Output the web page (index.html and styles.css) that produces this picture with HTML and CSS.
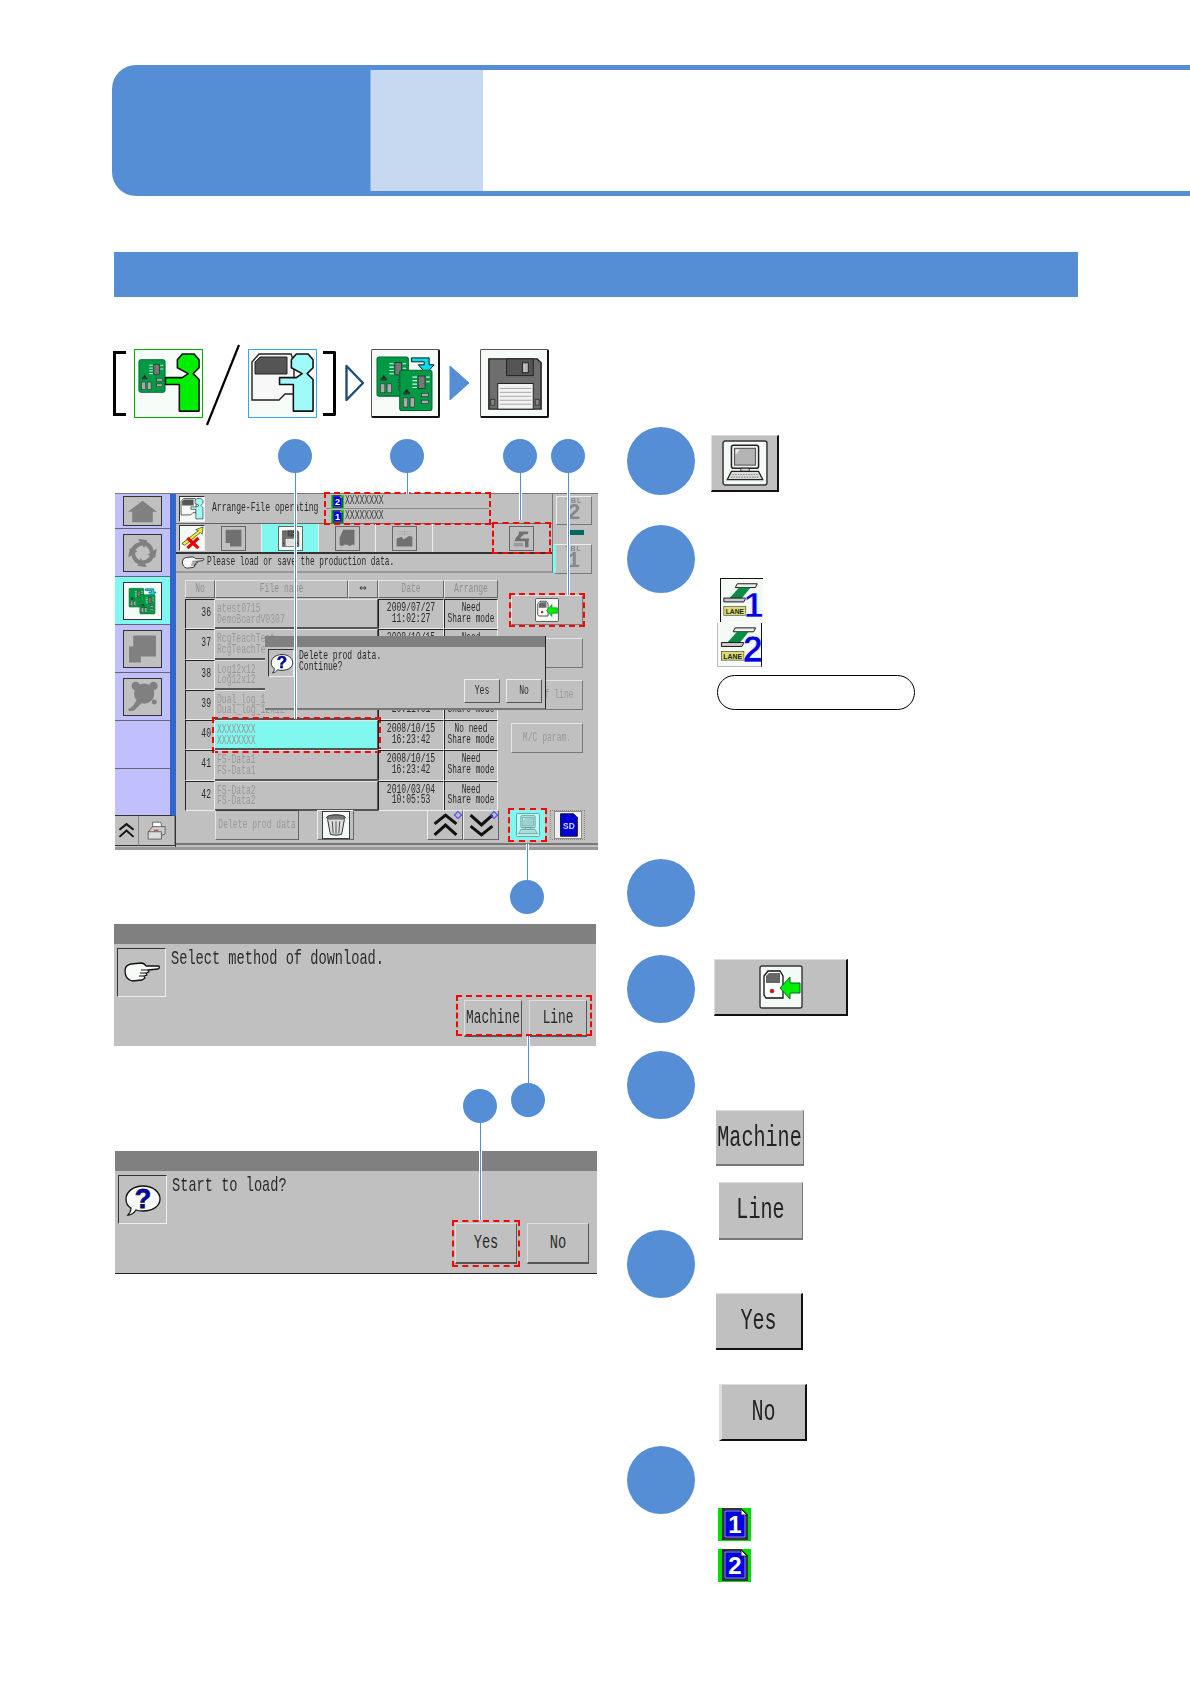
FILE: index.html
```html
<!DOCTYPE html>
<html lang="en">
<head>
  <meta charset="UTF-8">
  <title>Production data</title>
  <link rel="stylesheet" href="styles.css">
</head>
<body>
<svg class="defs" width="0" height="0">
  <symbol id="i-board" viewBox="0 0 30 37">
    <rect x="1" y="1" width="28" height="35" rx="2" fill="#009a44" stroke="#063" stroke-width="1"/>
    <rect x="17" y="6" width="6" height="11" fill="#777" stroke="#222" stroke-width=".6"/>
    <path d="M12 7h4M12 10h4M12 13h4M12 16h4M24 7h3M24 11h3" stroke="#cfe" stroke-width="1"/>
    <path d="M5 20l2-3 2 3z" fill="#222"/>
    <rect x="4" y="20" width="6" height="2" fill="#333"/>
    <rect x="4" y="25" width="4" height="8" fill="#aaa" stroke="#222" stroke-width=".5"/>
    <rect x="10" y="25" width="4" height="8" fill="#aaa" stroke="#222" stroke-width=".5"/>
    <rect x="20" y="21" width="6" height="3" fill="#aaa" stroke="#222" stroke-width=".5"/>
    <rect x="20" y="27" width="6" height="3" fill="#aaa" stroke="#222" stroke-width=".5"/>
  </symbol>
  <symbol id="i-person" viewBox="0 0 68 68">
    <path d="M48 4L60 4 65 10 65 18 59 24 65 30 65 62 45 62 45 35 31 35 31 28 48 28 54 24 43 18 43 10Z" stroke="#111" stroke-width="1.600" stroke-linejoin="round"/>
  </symbol>
  <symbol id="i-boards" viewBox="0 0 68 68">
    <use href="#i-board" x="4" y="4" width="34" height="46"/>
    <path d="M40 8H58V15H63L55 24 47 15H53V12H40Z" fill="#0de" stroke="#111" stroke-width="1"/>
    <use href="#i-board" x="27" y="18" width="35" height="46"/>
  </symbol>
  <symbol id="i-floppy" viewBox="0 0 68 68">
    <path d="M8 9H57L61 13V60H8Z" fill="#6e6e6e" stroke="#222" stroke-width="1.500"/>
    <rect x="26" y="9" width="27" height="17" fill="#555" stroke="#222"/>
    <rect x="42" y="13" width="6" height="10" fill="#bbb" stroke="#222"/>
    <rect x="17" y="34" width="36" height="26" fill="#f2f2f2" stroke="#222"/>
    <path d="M19 39H51M19 43H51M19 47H51M19 51H51M19 55H51" stroke="#aaa"/>
    <rect x="10" y="50" width="4" height="6" fill="#888" stroke="#222" stroke-width=".7"/>
    <rect x="55" y="50" width="4" height="6" fill="#888" stroke="#222" stroke-width=".7"/>
  </symbol>
  <symbol id="i-pc" viewBox="0 0 44 44">
    <rect x="1" y="1" width="42" height="42" rx="2" fill="#f4faf6" stroke="#333" stroke-width="1.400"/>
    <rect x="9" y="5" width="26" height="22" rx="2" fill="#eee" stroke="#222" stroke-width="1.400"/>
    <rect x="12" y="8" width="20" height="16" fill="#b4b4b4" stroke="#555"/>
    <path d="M13 9H17L13 14Z" fill="#eee"/>
    <rect x="18" y="27" width="8" height="3" fill="#ddd" stroke="#222" stroke-width=".8"/>
    <path d="M9 30H35L39 38H5Z" fill="#ddd" stroke="#222" stroke-width="1.200"/>
    <path d="M10 33H34M8.500 35.500H35.500" stroke="#888" stroke-dasharray="1.500 1"/>
  </symbol>
  <symbol id="i-door" viewBox="0 0 44 44">
    <rect x="1" y="1" width="42" height="42" rx="2" fill="#f4faf6" stroke="#333" stroke-width="1.400"/>
    <path d="M5 30V11L9 6H21L24 11V33H7Z" fill="#fff" stroke="#111" stroke-width="1.300"/>
    <path d="M7 18V11L10 8H21V18Z" fill="#666"/>
    <circle cx="13" cy="26" r="2" fill="#e00" stroke="#555" stroke-width=".6"/>
    <path d="M21 23L31 12V18H41V28H31V34Z" fill="#00ee00" stroke="#062" stroke-width="1"/>
  </symbol>
  <symbol id="i-lane1" viewBox="0 0 44 44">
    <path d="M17 5H38L36 9H15Z" fill="#eee" stroke="#111"/>
    <path d="M19 9H31L22 20H9Z" fill="#0a8c46"/>
    <path d="M3 20H26L24 24H3Z" fill="#ccc" stroke="#111"/>
    <rect x="3" y="29" width="23" height="9" fill="#dcdc70" stroke="#333" stroke-width=".6"/>
    <text x="14.500" y="36.500" text-anchor="middle" class="lane-tag">LANE</text>
    <text x="34" y="40" text-anchor="middle" class="lane-num">1</text>
  </symbol>
  <symbol id="i-lane2" viewBox="0 0 44 44">
    <path d="M17 5H38L36 9H15Z" fill="#eee" stroke="#111"/>
    <path d="M19 9H31L22 20H9Z" fill="#0a8c46"/>
    <path d="M3 20H26L24 24H3Z" fill="#ccc" stroke="#111"/>
    <rect x="3" y="29" width="23" height="9" fill="#dcdc70" stroke="#333" stroke-width=".6"/>
    <text x="14.500" y="36.500" text-anchor="middle" class="lane-tag">LANE</text>
    <text x="35" y="40" text-anchor="middle" class="lane-num">2</text>
  </symbol>
  <symbol id="i-hand" viewBox="0 0 38 24">
    <path d="M2 11Q2 5 8 4L18 3Q21 3 23 6L36 6Q37 8 35 9L25 10 26 12 23 13 24 15 21 16 22 18 19 20 9 21Q2 19 2 11Z" fill="#f8fcf8" stroke="#111" stroke-width="1.300" stroke-linejoin="round"/>
    <path d="M18 10H25M17 13H23M16 16H21" stroke="#111" stroke-width="1"/>
  </symbol>
  <symbol id="i-ask" viewBox="0 0 38 34">
    <path d="M19 2C29 2 36 8 36 15 36 22 29 27 19 27 17 27 14 27 12 26 10 29 7 31 4 31 6 29 7 27 7 24 3 22 2 18 2 15 2 8 9 2 19 2Z" fill="#f8fcf8" stroke="#111" stroke-width="1.300"/>
    <text x="19" y="24" text-anchor="middle" class="ask-mark">?</text>
  </symbol>
  <symbol id="i-trash" viewBox="0 0 30 30">
    <rect x=".5" y=".5" width="29" height="29" fill="#f4faf6" stroke="#333"/>
    <ellipse cx="15" cy="7" rx="10" ry="3" fill="#777" stroke="#222"/>
    <path d="M6 9L9 25Q15 27 21 25L24 9" fill="#ddd" stroke="#222"/>
    <path d="M11 11L12 24M15 11V25M19 11L18 24" stroke="#444"/>
  </symbol>
  <symbol id="i-printer" viewBox="0 0 30 26">
    <path d="M9 1H20L22 9H9Z" fill="#fff" stroke="#222" stroke-width=".8"/>
    <path d="M4 13L9 7H26V17L21 19H4Z" fill="#ccc" stroke="#222" stroke-width=".8"/>
    <path d="M3 14H21V24H3Z" fill="#ddd" stroke="#222" stroke-width=".8"/>
    <path d="M11 12H17" stroke="#c33" stroke-width="1.500"/>
  </symbol>
  <symbol id="i-chev" viewBox="0 0 24 22">
    <path d="M2 10L12 2 22 10M2 20L12 11 22 20" fill="none" stroke="#111" stroke-width="2.800"/>
  </symbol>
  <symbol id="i-sd" viewBox="0 0 30 30">
    <rect x=".5" y=".5" width="29" height="29" fill="#eee" stroke="#888"/>
    <path d="M7 3H21L25 7V27H7Z" fill="#0000d8" stroke="#111"/>
    <text x="16" y="19" text-anchor="middle" class="sd-tag">SD</text>
  </symbol>
  <symbol id="i-doc1" viewBox="0 0 33 33">
    <rect width="33" height="33" fill="#00e000"/>
    <path d="M5 1H23L29 7V31H5Z" fill="#0000e0" stroke="#333" stroke-width="2"/>
    <path d="M7 3H22L27 8V29H7Z" fill="none" stroke="#99a" stroke-width="1"/>
    <path d="M23 1V7H29Z" fill="#fff" stroke="#222"/>
    <text x="17" y="25" text-anchor="middle" class="doc-num">1</text>
  </symbol>
  <symbol id="i-doc2" viewBox="0 0 33 33">
    <rect width="33" height="33" fill="#00e000"/>
    <path d="M5 1H23L29 7V31H5Z" fill="#0000e0" stroke="#333" stroke-width="2"/>
    <path d="M7 3H22L27 8V29H7Z" fill="none" stroke="#99a" stroke-width="1"/>
    <path d="M23 1V7H29Z" fill="#fff" stroke="#222"/>
    <text x="17" y="25" text-anchor="middle" class="doc-num">2</text>
  </symbol>
  <symbol id="i-wheel-arm" viewBox="0 0 38 38">
    <path d="M5 17Q6 8 16 6L14 2 25 4 21 13 19 10Q12 11 10 17Z" fill="#808080"/>
  </symbol>
</svg>

<div class="page">
  <header class="head">
    <div class="head-solid"></div>
    <div class="head-rest"><div class="head-tint"></div></div>
  </header>
  <div class="section-bar"></div>

  <div class="path">
    <span class="bracket bracket-open"></span>
    <span class="tile tile-green">
      <svg class="tile-art"><use href="#i-board" x="3" y="8" width="28" height="36"/><use href="#i-person" width="67" height="67" fill="#00ee00"/></svg>
    </span>
    <svg class="slash" viewBox="0 0 34 82"><path d="M33 1L1 81" stroke="#000" stroke-width="2.200"/></svg>
    <span class="tile tile-blue">
      <svg class="tile-art" viewBox="0 0 67 67">
        <path d="M3 48V12L10 4H42L45 12V44H36L30 50H3Z" fill="#f8f8f8" stroke="#222" stroke-width="1.400"/>
        <path d="M6 24V12L11 7H38V24Z" fill="#555" stroke="#222"/>
        <use href="#i-person" width="67" height="67" fill="#a0fafa"/>
      </svg>
    </span>
    <span class="bracket bracket-close"></span>
    <svg class="arrow arrow-line" viewBox="0 0 20 38"><path d="M1.500 2L18 19 1.500 36Z" fill="none" stroke="#1f4e79" stroke-width="2.400" stroke-linejoin="round"/></svg>
    <span class="tile tile-dark"><svg class="tile-art"><use href="#i-boards" width="67" height="67"/></svg></span>
    <svg class="arrow arrow-solid" viewBox="0 0 21 38"><path d="M1 2L20 19 1 36Z" fill="#558ed5" stroke="#558ed5" stroke-width="1" stroke-linejoin="round"/></svg>
    <span class="tile tile-dark tile-floppy"><svg class="tile-art"><use href="#i-floppy" width="67" height="67"/></svg></span>
  </div>

  <div class="content">
    <div class="shots">
      <div class="screen">
        <div class="rail">
          <div class="rail-list">
            <div class="rail-cell rail-home"><span class="rail-btn"><svg viewBox="0 0 38 28"><path d="M19 2L36 15H31V27H7V15H2Z" fill="#808080"/></svg></span></div>
            <div class="rail-cell"><span class="rail-btn"><svg viewBox="0 0 38 38"><use href="#i-wheel-arm" width="38" height="38"/><use href="#i-wheel-arm" width="38" height="38" transform="rotate(90 19 19)"/><use href="#i-wheel-arm" width="38" height="38" transform="rotate(180 19 19)"/><use href="#i-wheel-arm" width="38" height="38" transform="rotate(270 19 19)"/></svg></span></div>
            <div class="rail-cell rail-on"><span class="rail-btn rail-btn-lit"><svg viewBox="0 0 38 38"><use href="#i-boards" width="38" height="38"/></svg></span></div>
            <div class="rail-cell"><span class="rail-btn"><svg viewBox="0 0 38 38"><path d="M8 3H35V28H17V35H3V16H8Z" fill="#808080"/></svg></span></div>
            <div class="rail-cell"><span class="rail-btn"><svg viewBox="0 0 38 38"><g fill="#808080"><circle cx="21" cy="15" r="12"/><circle cx="11" cy="6" r="5"/><circle cx="32" cy="6" r="5"/><circle cx="33" cy="25" r="3"/><path d="M13 21L18 26 9 35 3 36 2 33 5 32 8 29Z"/></g></svg></span></div>
            <div class="rail-cell"></div>
            <div class="rail-cell"></div>
          </div>
          <div class="rail-foot">
            <span class="rail-foot-btn rail-foot-chev"><svg><use href="#i-chev" width="17" height="17"/></svg></span>
            <span class="rail-foot-btn"><svg class="printer"><use href="#i-printer" width="22" height="20"/></svg></span>
          </div>
        </div>

        <div class="main">
          <div class="top">
            <div class="top-left">
              <div class="title-row">
                <span class="icon-box icon-box-light"><svg viewBox="0 0 67 67">
                  <path d="M3 48V12L10 4H42L45 12V44H36L30 50H3Z" fill="#f8f8f8" stroke="#222" stroke-width="2"/>
                  <path d="M6 24V12L11 7H38V24Z" fill="#555"/>
                  <use href="#i-person" width="67" height="67" fill="#a0fafa"/></svg></span>
                <span class="screen-title"><span class="nt">Arrange-File operating</span></span>
                <div class="files">
                  <div class="file-line"><svg class="file-doc"><use href="#i-doc2" width="13" height="13"/></svg><span class="nt">XXXXXXXX</span></div>
                  <div class="file-line"><svg class="file-doc"><use href="#i-doc1" width="13" height="13"/></svg><span class="nt">XXXXXXXX</span></div>
                </div>
              </div>
              <div class="tab-row">
                <span class="icon-box icon-box-light"><svg viewBox="0 0 26 26"><path d="M2 19L20 5 17 4 25 1 24 9 22 7 5 21Z" fill="#ee3" stroke="#222" stroke-width=".7"/><path d="M8 13L20 24M20 13L8 24" stroke="#e00" stroke-width="3.500"/></svg></span>
                <span class="tab"><span class="tab-icon"><svg viewBox="0 0 24 24"><path d="M3 2H21V21H8V17H3Z" fill="#707070"/></svg></span></span>
                <span class="tab tab-on"><span class="tab-icon tab-icon-lit"><svg viewBox="0 0 68 68"><use href="#i-floppy" width="68" height="68"/></svg></span></span>
                <span class="tab"><span class="tab-icon"><svg viewBox="0 0 24 24"><path d="M7 2H20V19H17A3 3 0 0 1 12 19H8A3 3 0 0 1 3 19V11Z" fill="#707070"/></svg></span></span>
                <span class="tab"><span class="tab-icon"><svg viewBox="0 0 24 24"><path d="M3 12L9 10 11 13 17 9 21 10V21H3Z" fill="#707070"/><path d="M3 4H21M3 7H21M12 2V9" stroke="#aaa" stroke-width=".8"/></svg></span></span>
                <span class="tab tab-blank"></span>
                <span class="tab tab-lane hl"><span class="tab-icon"><svg viewBox="0 0 24 24"><path d="M9 4H20L19 7H15L10 12H21L20 15H4L5 12 9 7Z" fill="#707070"/><path d="M16 14H20V22H16Z" fill="#707070"/><rect x="3" y="17" width="11" height="4" fill="#999"/></svg></span></span>
              </div>
              <div class="msg-row">
                <svg class="msg-hand"><use href="#i-hand" width="24" height="15"/></svg>
                <span class="msg-text"><span class="nt">Please load or save the production data.</span></span>
              </div>
            </div>
            <div class="tbl-col">
              <div class="tbl-btn"><span class="tbl-tag">TBL</span><span class="tbl-num">2</span></div>
              <div class="tbl-lamp"></div>
              <div class="tbl-btn tbl-btn-lit"><span class="tbl-tag">TBL</span><span class="tbl-num">1</span></div>
            </div>
          </div>

          <div class="work">
            <div class="tbl">
              <span class="th"><span class="nt">No</span></span><span class="th"><span class="nt">File name</span></span><span class="th th-swap">⇔</span><span class="th"><span class="nt">Date</span></span><span class="th"><span class="nt">Arrange</span></span>

              <span class="td-no"><span class="nt">36</span></span><span class="td-name"><span class="nt">atest0715<br>DemoBoardV0307</span></span><span class="td-date"><span class="nt">2009/07/27<br>11:02:27</span></span><span class="td-mode"><span class="nt">Need<br>Share mode</span></span>
              <span class="td-no"><span class="nt">37</span></span><span class="td-name"><span class="nt">RcgTeachTest<br>RcgTeachTest</span></span><span class="td-date"><span class="nt">2008/10/15<br>16:23:42</span></span><span class="td-mode"><span class="nt">Need<br>Share mode</span></span>
              <span class="td-no"><span class="nt">38</span></span><span class="td-name"><span class="nt">Log12x12<br>Log12x12</span></span><span class="td-date"><span class="nt">2008/10/15<br>16:23:42</span></span><span class="td-mode"><span class="nt">Need<br>Share mode</span></span>
              <span class="td-no"><span class="nt">39</span></span><span class="td-name"><span class="nt">Dual_log_12x12<br>Dual_log_12x12</span></span><span class="td-date"><span class="nt">2008/10/15<br>20:11:01</span></span><span class="td-mode"><span class="nt">Need<br>Share mode</span></span>
              <span class="td-no"><span class="nt">40</span></span><span class="td-name td-picked hl"><span class="nt">XXXXXXXX<br>XXXXXXXX</span></span><span class="td-date"><span class="nt">2008/10/15<br>16:23:42</span></span><span class="td-mode"><span class="nt">No need<br>Share mode</span></span>
              <span class="td-no"><span class="nt">41</span></span><span class="td-name"><span class="nt">FS-Data1<br>FS-Data1</span></span><span class="td-date"><span class="nt">2008/10/15<br>16:23:42</span></span><span class="td-mode"><span class="nt">Need<br>Share mode</span></span>
              <span class="td-no"><span class="nt">42</span></span><span class="td-name"><span class="nt">FS-Data2<br>FS-Data2</span></span><span class="td-date"><span class="nt">2010/03/04<br>10:05:53</span></span><span class="td-mode"><span class="nt">Need<br>Share mode</span></span>
            </div>
            <div class="side-btns">
              <span class="side-btn hl"><svg class="side-door"><use href="#i-door" width="24" height="24"/></svg></span>
              <span class="side-btn"></span>
              <span class="side-btn side-btn-text"><span class="nt">End of line</span></span>
              <span class="side-btn side-btn-text"><span class="nt">M/C param.</span></span>
            </div>
          </div>

          <div class="foot">
            <span class="foot-delete"><span class="nt">Delete prod data</span></span>
            <span class="foot-trash"><svg><use href="#i-trash" width="28" height="28"/></svg></span>
            <span class="foot-pages">
              <span class="foot-page"><svg><use href="#i-chev" width="27" height="24"/></svg></span>
              <span class="foot-page foot-page-down"><svg><use href="#i-chev" width="27" height="24"/></svg></span>
            </span>
            <span class="foot-pc hl"><svg><use href="#i-pc" width="24" height="24"/></svg></span>
            <span class="foot-sd"><svg><use href="#i-sd" width="28" height="28"/></svg></span>
          </div>
        </div>

        <div class="confirm">
          <div class="confirm-bar"></div>
          <div class="confirm-body">
            <span class="confirm-icon"><svg><use href="#i-ask" width="24" height="22"/></svg></span>
            <p class="confirm-text"><span class="nt">Delete prod data.<br>Continue?</span></p>
          </div>
          <div class="confirm-btns"><span class="confirm-btn"><span class="nt">Yes</span></span><span class="confirm-btn"><span class="nt">No</span></span></div>
        </div>
      </div>

      <div class="dialog dialog-method">
        <div class="dialog-bar"></div>
        <div class="dialog-main">
          <span class="dialog-icon"><svg><use href="#i-hand" width="38" height="24" x="5" y="11"/></svg></span>
          <p class="dialog-text"><span class="nt">Select method of download.</span></p>
        </div>
        <div class="dialog-btns">
          <div class="btn-pair hl">
            <span class="dialog-btn dialog-btn-small"><span class="nt">Machine</span></span>
            <span class="dialog-btn dialog-btn-small"><span class="nt">Line</span></span>
          </div>
        </div>
      </div>

      <div class="dialog dialog-start">
        <div class="dialog-bar"></div>
        <div class="dialog-main">
          <span class="dialog-icon"><svg><use href="#i-ask" width="38" height="34" x="5" y="8"/></svg></span>
          <p class="dialog-text"><span class="nt">Start to load?</span></p>
        </div>
        <div class="dialog-btns">
          <span class="dialog-btn dialog-btn-wide hl"><span class="nt">Yes</span></span>
          <span class="dialog-btn dialog-btn-wide dialog-btn-no"><span class="nt">No</span></span>
        </div>
      </div>
    </div>

    <div class="steps">
      <div class="step step-a">
        <span class="step-dot"></span>
        <div class="step-body">
          <span class="big-btn big-btn-pc"><svg><use href="#i-pc" width="46" height="46"/></svg></span>
        </div>
      </div>
      <div class="step step-b">
        <span class="step-dot"></span>
        <div class="step-body">
          <span class="lane lane-one"><svg><use href="#i-lane1" width="42" height="42"/></svg></span>
          <span class="lane lane-two"><svg><use href="#i-lane2" width="44" height="43"/></svg></span>
          <span class="pill"></span>
        </div>
      </div>
      <div class="step step-c"><span class="step-dot"></span></div>
      <div class="step step-d">
        <span class="step-dot"></span>
        <div class="step-body">
          <span class="big-btn big-btn-door"><svg><use href="#i-door" width="44" height="44"/></svg></span>
        </div>
      </div>
      <div class="step step-e">
        <span class="step-dot"></span>
        <div class="step-body">
          <span class="key key-machine"><span class="nt">Machine</span></span>
          <span class="key key-line"><span class="nt">Line</span></span>
        </div>
      </div>
      <div class="step step-f">
        <span class="step-dot"></span>
        <div class="step-body">
          <span class="key key-yes"><span class="nt">Yes</span></span>
          <span class="key key-no"><span class="nt">No</span></span>
        </div>
      </div>
      <div class="step step-g">
        <span class="step-dot"></span>
        <div class="step-body">
          <svg class="doc"><use href="#i-doc1" width="33" height="33"/></svg>
          <svg class="doc doc-two"><use href="#i-doc2" width="33" height="33"/></svg>
        </div>
      </div>
    </div>
  </div>

  <!-- leader lines and number dots over the screenshots -->
  <span class="lead lead-a"></span>
  <span class="lead lead-b"></span>
  <span class="lead lead-c"></span>
  <span class="lead lead-d"></span>
  <span class="lead lead-e"></span>
  <span class="lead lead-f"></span>
  <span class="lead lead-g"></span>
  <span class="pin pin-a"></span>
  <span class="pin pin-b"></span>
  <span class="pin pin-c"></span>
  <span class="pin pin-d"></span>
  <span class="pin pin-e"></span>
  <span class="pin pin-f"></span>
  <span class="pin pin-g"></span>
</div>
</body>
</html>
```

FILE: styles.css
```css
* {
  box-sizing: border-box;
}
body {
  margin: 0;
  background-color: #fff;
  font-family: "Liberation Mono", "DejaVu Sans Mono", monospace;
  color: #2a2a2a;
}
p {
  margin: 0;
}
svg {
  display: block;
}
.defs {
  display: none;
}
.hl {
  outline: 2px dashed #f00;
  outline-offset: 1px;
}
/* the machine font is tall and narrow: squeeze a bigger mono size */
.nt {
  --squeeze: .62;
  display: block;
  flex: none;
  width: calc(100% / var(--squeeze));
  transform: scaleX(var(--squeeze));
  transform-origin: 0 0;
  white-space: nowrap;
}
.lane-tag {
  font: bold 7px "Liberation Sans", sans-serif;
  fill: #222;
}
.lane-num {
  font: bold 37px "Liberation Sans", sans-serif;
  fill: #0000e0;
  stroke: #fff;
  stroke-width: .6px;
}
.ask-mark {
  font: bold 27px "Liberation Sans", sans-serif;
  fill: #0000d8;
  stroke: #111;
  stroke-width: .8px;
}
.sd-tag {
  font: bold 9px "Liberation Sans", sans-serif;
  fill: #ddd;
}
.doc-num {
  font: bold 24px "Liberation Sans", sans-serif;
  fill: #fff;
}

.page {
  position: relative;
  width: 1190px;
  height: 1684px;
  overflow: hidden;
  padding-top: 65px;
}

/* header */
.head {
  display: flex;
  height: 131px;
  margin-left: 112px;
}
.head-solid {
  width: 258px;
  background-color: #558ed5;
  border-radius: 24px 0 0 24px;
}
.head-rest {
  flex: 1;
  border-top: 5px solid #558ed5;
  border-bottom: 5px solid #558ed5;
}
.head-tint {
  width: 113px;
  height: 100%;
  background-color: #c6d9f1;
  border-left: 1px solid #8eb4e3;
}
.section-bar {
  width: 964px;
  height: 45px;
  margin: 56px 0 0 114px;
  background-color: #558ed5;
}

/* icon path */
.path {
  display: flex;
  align-items: center;
  height: 70px;
  margin: 51px 0 0 113px;
}
.bracket {
  width: 13px;
  height: 65px;
  border: 3px solid #000;
}
.bracket-open {
  border-right: none;
}
.bracket-close {
  border-left: none;
  margin-left: 6px;
  border-radius: 0 2px 2px 0;
}
.tile {
  width: 69px;
  height: 69px;
  background-color: #f6fbf7;
}
.tile-art {
  width: 100%;
  height: 100%;
}
.tile-green {
  margin-left: 8px;
  border: 1.5px solid #0a0;
}
.tile-blue {
  border: 1.5px solid #33a8f0;
}
.tile-dark {
  margin-left: 6px;
  border: 1px solid #555;
  border-right: 2px solid #111;
  border-bottom: 2px solid #111;
  border-radius: 2px;
}
.tile-floppy {
  margin-left: 10px;
}
.slash {
  width: 34px;
  height: 82px;
  margin: 4px 8px 0 3px;
  flex-shrink: 0;
}
.arrow {
  flex-shrink: 0;
  height: 38px;
}
.arrow-line {
  width: 20px;
  margin-left: 9px;
}
.arrow-solid {
  width: 21px;
  margin-left: 9px;
}

/* two column part */
.content {
  display: grid;
  grid-template-columns: 512px 1fr;
  margin: 9px 0 0 115px;
}
.shots {
  padding-top: 66px;
}

/* machine screen */
.screen {
  position: relative;
  display: flex;
  width: 483px;
  height: 357px;
  background-color: #c0c0c0;
  border-top: 1px solid #777;
  border-bottom: 3px solid #999;
  font-size: 13px;
  line-height: 10.500px;
  filter: blur(.3px);
}
.rail {
  display: flex;
  flex-direction: column;
  width: 61px;
}
.rail-list {
  display: flex;
  flex-direction: column;
  height: 322px;
  border-right: 6px solid #3366cc;
  border-bottom: 1px solid #333;
  background-color: #c0c0ff;
}
.rail-cell {
  flex: 48px 0 0;
  display: flex;
  align-items: center;
  justify-content: center;
  border-bottom: 1px solid #667;
}
.rail-cell:last-child {
  border-bottom: none;
}
.rail-home {
  flex-basis: 35px;
}
.rail-on {
  background-color: #80f8f0;
}
.rail-btn {
  width: 39px;
  height: 38px;
  padding: 2px;
  background-color: #c0c0c0;
  border: 1px solid #333;
}
.rail-home .rail-btn {
  height: 30px;
}
.rail-btn-lit {
  background-color: #f4faf6;
}
.rail-btn svg {
  width: 100%;
  height: 100%;
}
.rail-foot {
  display: flex;
  flex: 1;
  border-right: 1px solid #333;
}
.rail-foot-btn {
  display: flex;
  align-items: center;
  justify-content: center;
  width: 24px;
  height: 30px;
  border-bottom: 1px solid #333;
  border-right: 1px solid #888;
}
.rail-foot-btn svg {
  width: 17px;
  height: 17px;
}
.rail-foot-btn:last-child {
  flex: 1;
}
.rail-foot-btn .printer {
  width: 22px;
  height: 20px;
}

.main {
  flex: 1;
  display: flex;
  flex-direction: column;
}
.top {
  display: flex;
  height: 79px;
}
.top-left {
  width: 377px;
  border-right: 1px solid #777;
}
.title-row {
  display: flex;
  align-items: center;
  height: 29px;
  padding-left: 3px;
}
.icon-box {
  flex-shrink: 0;
  width: 26px;
  height: 26px;
  background-color: #f4faf6;
  border: 1px solid #333;
  border-right-color: #eee;
  border-bottom-color: #eee;
}
.icon-box svg {
  width: 100%;
  height: 100%;
}
.screen-title {
  width: 121px;
  padding-left: 7px;
}
.files {
  width: 163px;
  height: 29px;
  outline: 2px dashed #f00;
  outline-offset: 0;
}
.file-line {
  display: flex;
  align-items: center;
  gap: 1px;
  height: 15px;
  padding-left: 5px;
  color: #444;
  border-bottom: 1px solid #888;
}
.file-line:last-child {
  border-bottom: none;
}
.file-doc {
  flex: none;
  width: 13px;
  height: 13px;
}
.tab-row {
  display: flex;
  align-items: center;
  height: 31px;
  padding-left: 3px;
  border-top: 1px solid #666;
  border-bottom: 2px solid #333;
}
.tab {
  display: flex;
  align-items: center;
  justify-content: center;
  width: 57px;
  height: 100%;
  border-right: 1px solid #eee;
}
.tab-on {
  background-color: #80f8f0;
}
.tab-blank {
  border-right: none;
}
.tab-lane {
  width: 53px;
  height: 26px;
  margin-left: 5px;
  border-right: none;
}
.tab-icon {
  width: 25px;
  height: 25px;
  padding: 1px;
  border: 1px solid #666;
  background-color: #c0c0c0;
}
.tab-icon-lit {
  background-color: #f4faf6;
}
.tab-icon svg {
  width: 100%;
  height: 100%;
}
.msg-row {
  display: flex;
  align-items: center;
  height: 19px;
  padding-left: 5px;
  border-bottom: 2px solid #999;
}
.msg-hand {
  width: 24px;
  height: 15px;
  margin-right: 2px;
  flex-shrink: 0;
}
.msg-text {
  flex: 1;
}
.msg-text .nt {
  --squeeze: .6;
}
.tbl-col {
  flex: 1;
  padding: 2px 6px 0 3px;
}
.tbl-btn {
  display: flex;
  flex-direction: column;
  align-items: center;
  height: 29px;
  color: #888;
  font-weight: bold;
  border: 1px solid #eee;
  border-right-color: #777;
  border-bottom-color: #777;
}
.tbl-tag {
  font-size: 7px;
  line-height: 8px;
  letter-spacing: 1px;
  font-family: "Liberation Sans", sans-serif;
}
.tbl-num {
  font-size: 22px;
  line-height: 18px;
}
.tbl-btn-lit {
  height: 30px;
  border-left: 3px solid #80f8f0;
  margin-left: -3px;
}
.tbl-lamp {
  width: 14px;
  height: 5px;
  margin: 5px 0 9px 14px;
  background-color: #066;
}

.work {
  display: flex;
  padding: 7px 0 0 9px;
}
.tbl {
  display: grid;
  grid-template-columns: 30px 133px 30px 66px 54px;
  grid-auto-rows: 30.3px;
  grid-template-rows: 19px;
  width: 313px;
  text-align: center;
}
.th {
  height: 18px;
  line-height: 15px;
  color: #909090;
  border: 1px solid #e4e4e4;
  border-right-color: #666;
  border-bottom-color: #666;
}
.th-swap {
  color: #333;
  font-size: 9px;
  font-family: "DejaVu Sans", sans-serif;
}
.td-no {
  line-height: 25px;
  text-align: right;
  padding-right: 3px;
  border-top: 1.5px solid #222;
  border-left: 1.5px solid #222;
  border-right: 1px solid #eee;
  border-bottom: 1px solid #eee;
}
.td-name {
  grid-column: span 2;
  padding: 4px 0 0 2px;
  text-align: left;
  color: #999;
  border-top: 1px solid #e4e4e4;
  border-bottom: 2px solid #555;
  border-right: 1px solid #555;
  overflow: hidden;
}
.td-picked {
  background-color: #80f8f0;
  overflow: visible;
}
.td-date, .td-mode {
  padding-top: 3px;
  border-top: 1.5px solid #222;
  border-left: 1px solid #222;
  border-right: 1px solid #eee;
  border-bottom: 1px solid #eee;
}
.td-mode .nt {
  --squeeze: .6;
}
.side-btns {
  display: flex;
  flex-direction: column;
  gap: 12.500px;
  width: 72px;
  margin: 15px 0 0 13px;
}
.side-btn {
  display: flex;
  align-items: center;
  justify-content: center;
  height: 30px;
  color: #999;
  border: 1px solid #e4e4e4;
  border-right-color: #777;
  border-bottom-color: #777;
  outline-offset: 0;
}
.side-door {
  width: 24px;
  height: 24px;
}
.side-btn-text {
  display: block;
  line-height: 28px;
  text-align: center;
}
.foot {
  display: flex;
  align-items: center;
  height: 35px;
  margin-top: -1px;
  padding: 0 0 3px 39px;
  border-bottom: 2px solid #777;
}
.foot-delete {
  width: 84px;
  height: 30px;
  line-height: 28px;
  text-align: center;
  color: #999;
  border: 1px solid #e4e4e4;
  border-top-color: #333;
  border-right-color: #666;
  border-bottom-color: #666;
}
.foot-trash {
  display: flex;
  align-items: center;
  justify-content: center;
  width: 37px;
  height: 30px;
  margin-left: 18px;
  border: 1px solid #eee;
  border-right-color: #666;
  border-bottom-color: #666;
}
.foot-trash svg {
  width: 28px;
  height: 28px;
}
.foot-pages {
  display: flex;
  margin-left: 73px;
}
.foot-page {
  display: flex;
  align-items: center;
  justify-content: center;
  position: relative;
  width: 36px;
  height: 30px;
  border: 1px solid #eee;
  border-right-color: #666;
  border-bottom-color: #666;
}
.foot-page::after {
  content: "";
  position: absolute;
  top: 1px;
  right: 1px;
  width: 4px;
  height: 4px;
  border: 1px solid #44f;
  transform: rotate(45deg);
}
.foot-page svg {
  width: 27px;
  height: 24px;
}
.foot-page-down svg {
  transform: rotate(180deg);
}
.foot-pc {
  display: flex;
  align-items: center;
  justify-content: center;
  width: 35px;
  height: 30px;
  margin-left: 11px;
  background-color: #80f8f0;
  outline-offset: 0;
}
.foot-pc svg {
  width: 24px;
  height: 24px;
  opacity: .55;
}
.foot-sd {
  display: flex;
  align-items: center;
  justify-content: center;
  width: 35px;
  height: 30px;
  margin-left: 5px;
  border: 1px dotted #888;
}
.foot-sd svg {
  width: 28px;
  height: 28px;
}

/* the confirm box lies over the list */
.confirm {
  position: absolute;
  top: 142px;
  left: 150px;
  width: 281px;
  height: 74px;
  background-color: #c0c0c0;
  border-right: 1px solid #222;
  border-bottom: 2px solid #777;
}
.confirm-bar {
  height: 11px;
  background-color: #808080;
}
.confirm-body {
  display: flex;
  gap: 5px;
  padding: 2px 0 0 3px;
}
.confirm-icon {
  flex: none;
  width: 26px;
  height: 28px;
  padding: 3px 0 0 1px;
  border: 1px solid #333;
  border-right-color: #eee;
  border-bottom-color: #eee;
}
.confirm-icon svg {
  width: 24px;
  height: 22px;
}
.confirm-text {
  flex: 1;
  padding-top: 2px;
}
.confirm-btns {
  position: absolute;
  top: 43px;
  right: 3px;
  display: flex;
  gap: 6px;
}
.confirm-btn {
  width: 36px;
  height: 24px;
  line-height: 22px;
  text-align: center;
  border: 1px solid #eee;
  border-right-color: #555;
  border-bottom-color: #555;
}

/* dialogs under the screen */
.dialog {
  position: relative;
  width: 482px;
  background-color: #c0c0c0;
  font-size: 21px;
  line-height: 20px;
  filter: blur(.3px);
}
.dialog .nt {
  --squeeze: .65;
}
.dialog-method {
  height: 122px;
  margin: 74px 0 0 -1px;
}
.dialog-start {
  height: 123px;
  margin-top: 105px;
  border-bottom: 1px solid #222;
}
.dialog-bar {
  height: 20px;
  background-color: #808080;
}
.dialog-main {
  display: flex;
  gap: 5px;
  padding: 4px 0 0 3px;
}
.dialog-icon {
  flex-shrink: 0;
  width: 49px;
  height: 49px;
  border: 1px solid #333;
  border-right-color: #eee;
  border-bottom-color: #eee;
}
.dialog-icon svg {
  width: 100%;
  height: 100%;
}
.dialog-text {
  flex: 1;
  padding-top: 1px;
}
.dialog-btns {
  position: absolute;
  display: flex;
  right: 8px;
  bottom: 9px;
}
.dialog-method .dialog-btns {
  right: 4px;
  bottom: 10px;
}
.dialog-btn {
  text-align: center;
  border: 1px solid #ddd;
  border-right: 1px solid #555;
  border-bottom: 2px solid #555;
}
.btn-pair {
  display: flex;
  gap: 7px;
  height: 41px;
  padding: 5px 5px 0 8px;
  outline-offset: -2px;
}
.dialog-btn-small {
  flex: none;
  width: 58px;
  height: 37px;
  line-height: 34px;
  font-size: 20px;
}
.dialog-method .nt {
  --squeeze: .64;
}
.dialog-text .nt {
  --squeeze: .65;
}
.dialog-btn-wide {
  width: 62px;
  height: 41px;
  line-height: 38px;
}
.dialog-btn-no {
  margin-left: 10px;
}

/* right hand steps */
.steps {
  display: flex;
  flex-direction: column;
}
.step {
  display: flex;
}
.step-a { height: 98px; }
.step-b { height: 334px; }
.step-c { height: 96px; }
.step-d { height: 96px; }
.step-e { height: 179px; }
.step-f { height: 216px; }
.step-g { height: 160px; }
.step-dot {
  flex-shrink: 0;
  width: 68px;
  height: 68px;
  border-radius: 50%;
  background-color: #558ed5;
}
.step-body {
  display: flex;
  flex-direction: column;
  align-items: flex-start;
}
.big-btn {
  display: flex;
  align-items: center;
  justify-content: center;
  background-color: #c0c0c0;
  border: 1px solid #ddd;
  border-right: 2px solid #111;
  border-bottom: 2px solid #111;
}
.big-btn-pc {
  width: 68px;
  height: 57px;
  margin: 8px 0 0 16px;
}
.big-btn-pc svg {
  width: 46px;
  height: 46px;
}
.big-btn-door {
  width: 134px;
  height: 57px;
  margin: 4px 0 0 19px;
}
.big-btn-door svg {
  width: 44px;
  height: 44px;
}
.lane {
  background-color: #f4faf6;
}
.lane-one {
  width: 43px;
  height: 44px;
  margin: 53px 0 0 25px;
  border-top: 1px solid #111;
  border-left: 1px solid #111;
}
.lane-two {
  width: 45px;
  height: 44px;
  margin: 1px 0 0 22px;
  border-right: 1px solid #111;
  border-left: 1px solid #bbb;
  border-bottom: 1px solid #bbb;
}
.lane svg {
  width: 100%;
  height: 100%;
}
.pill {
  width: 198px;
  height: 35px;
  margin: 8px 0 0 22px;
  border: 1px solid #000;
  border-radius: 18px;
}
.key {
  display: block;
  flex: none;
  background-color: #c0c0c0;
  font-size: 30px;
  line-height: 54px;
  text-align: center;
  color: #222;
  border-top: 1px solid #ddd;
  border-right: 1px solid #777;
  border-bottom: 2px solid #777;
  filter: blur(.3px);
}
.key .nt {
  --squeeze: .67;
}
.key-machine {
  width: 88px;
  height: 56px;
  margin: 59px 0 0 21px;
}
.key-line {
  width: 84px;
  height: 58px;
  margin: 16px 0 0 24px;
}
.key-yes {
  width: 87px;
  height: 57px;
  margin: 63px 0 0 21px;
  border-right: 2px solid #111;
  border-bottom: 2px solid #111;
}
.key-no {
  width: 88px;
  height: 57px;
  margin: 34px 0 0 24px;
  border-left: 3px solid #ddd;
  border-right: 2px solid #111;
  border-bottom: 2px solid #111;
}
.doc {
  flex: none;
  width: 33px;
  height: 33px;
  margin: 62px 0 0 23px;
}
.doc-two {
  margin-top: 8px;
}

/* dots and leader lines */
.lead {
  position: absolute;
  width: 1px;
  background-color: #558ed5;
  box-shadow: 1px 0 #fff, -1px 0 #fff;
}
.lead-a { left: 295px; top: 473px; height: 246px; }
.lead-b { left: 407px; top: 473px; height: 21px; }
.lead-c { left: 520px; top: 473px; height: 47px; }
.lead-d { left: 568px; top: 473px; height: 122px; }
.lead-e { left: 527px; top: 844px; height: 36px; }
.lead-f { left: 528px; top: 1036px; height: 47px; }
.lead-g { left: 480px; top: 1123px; height: 97px; }
.pin {
  position: absolute;
  width: 34px;
  height: 34px;
  border-radius: 50%;
  background-color: #558ed5;
}
.pin-a { left: 278px; top: 439px; }
.pin-b { left: 390px; top: 439px; }
.pin-c { left: 503px; top: 439px; }
.pin-d { left: 551px; top: 439px; }
.pin-e { left: 510px; top: 880px; }
.pin-f { left: 511px; top: 1083px; }
.pin-g { left: 463px; top: 1089px; }
```
